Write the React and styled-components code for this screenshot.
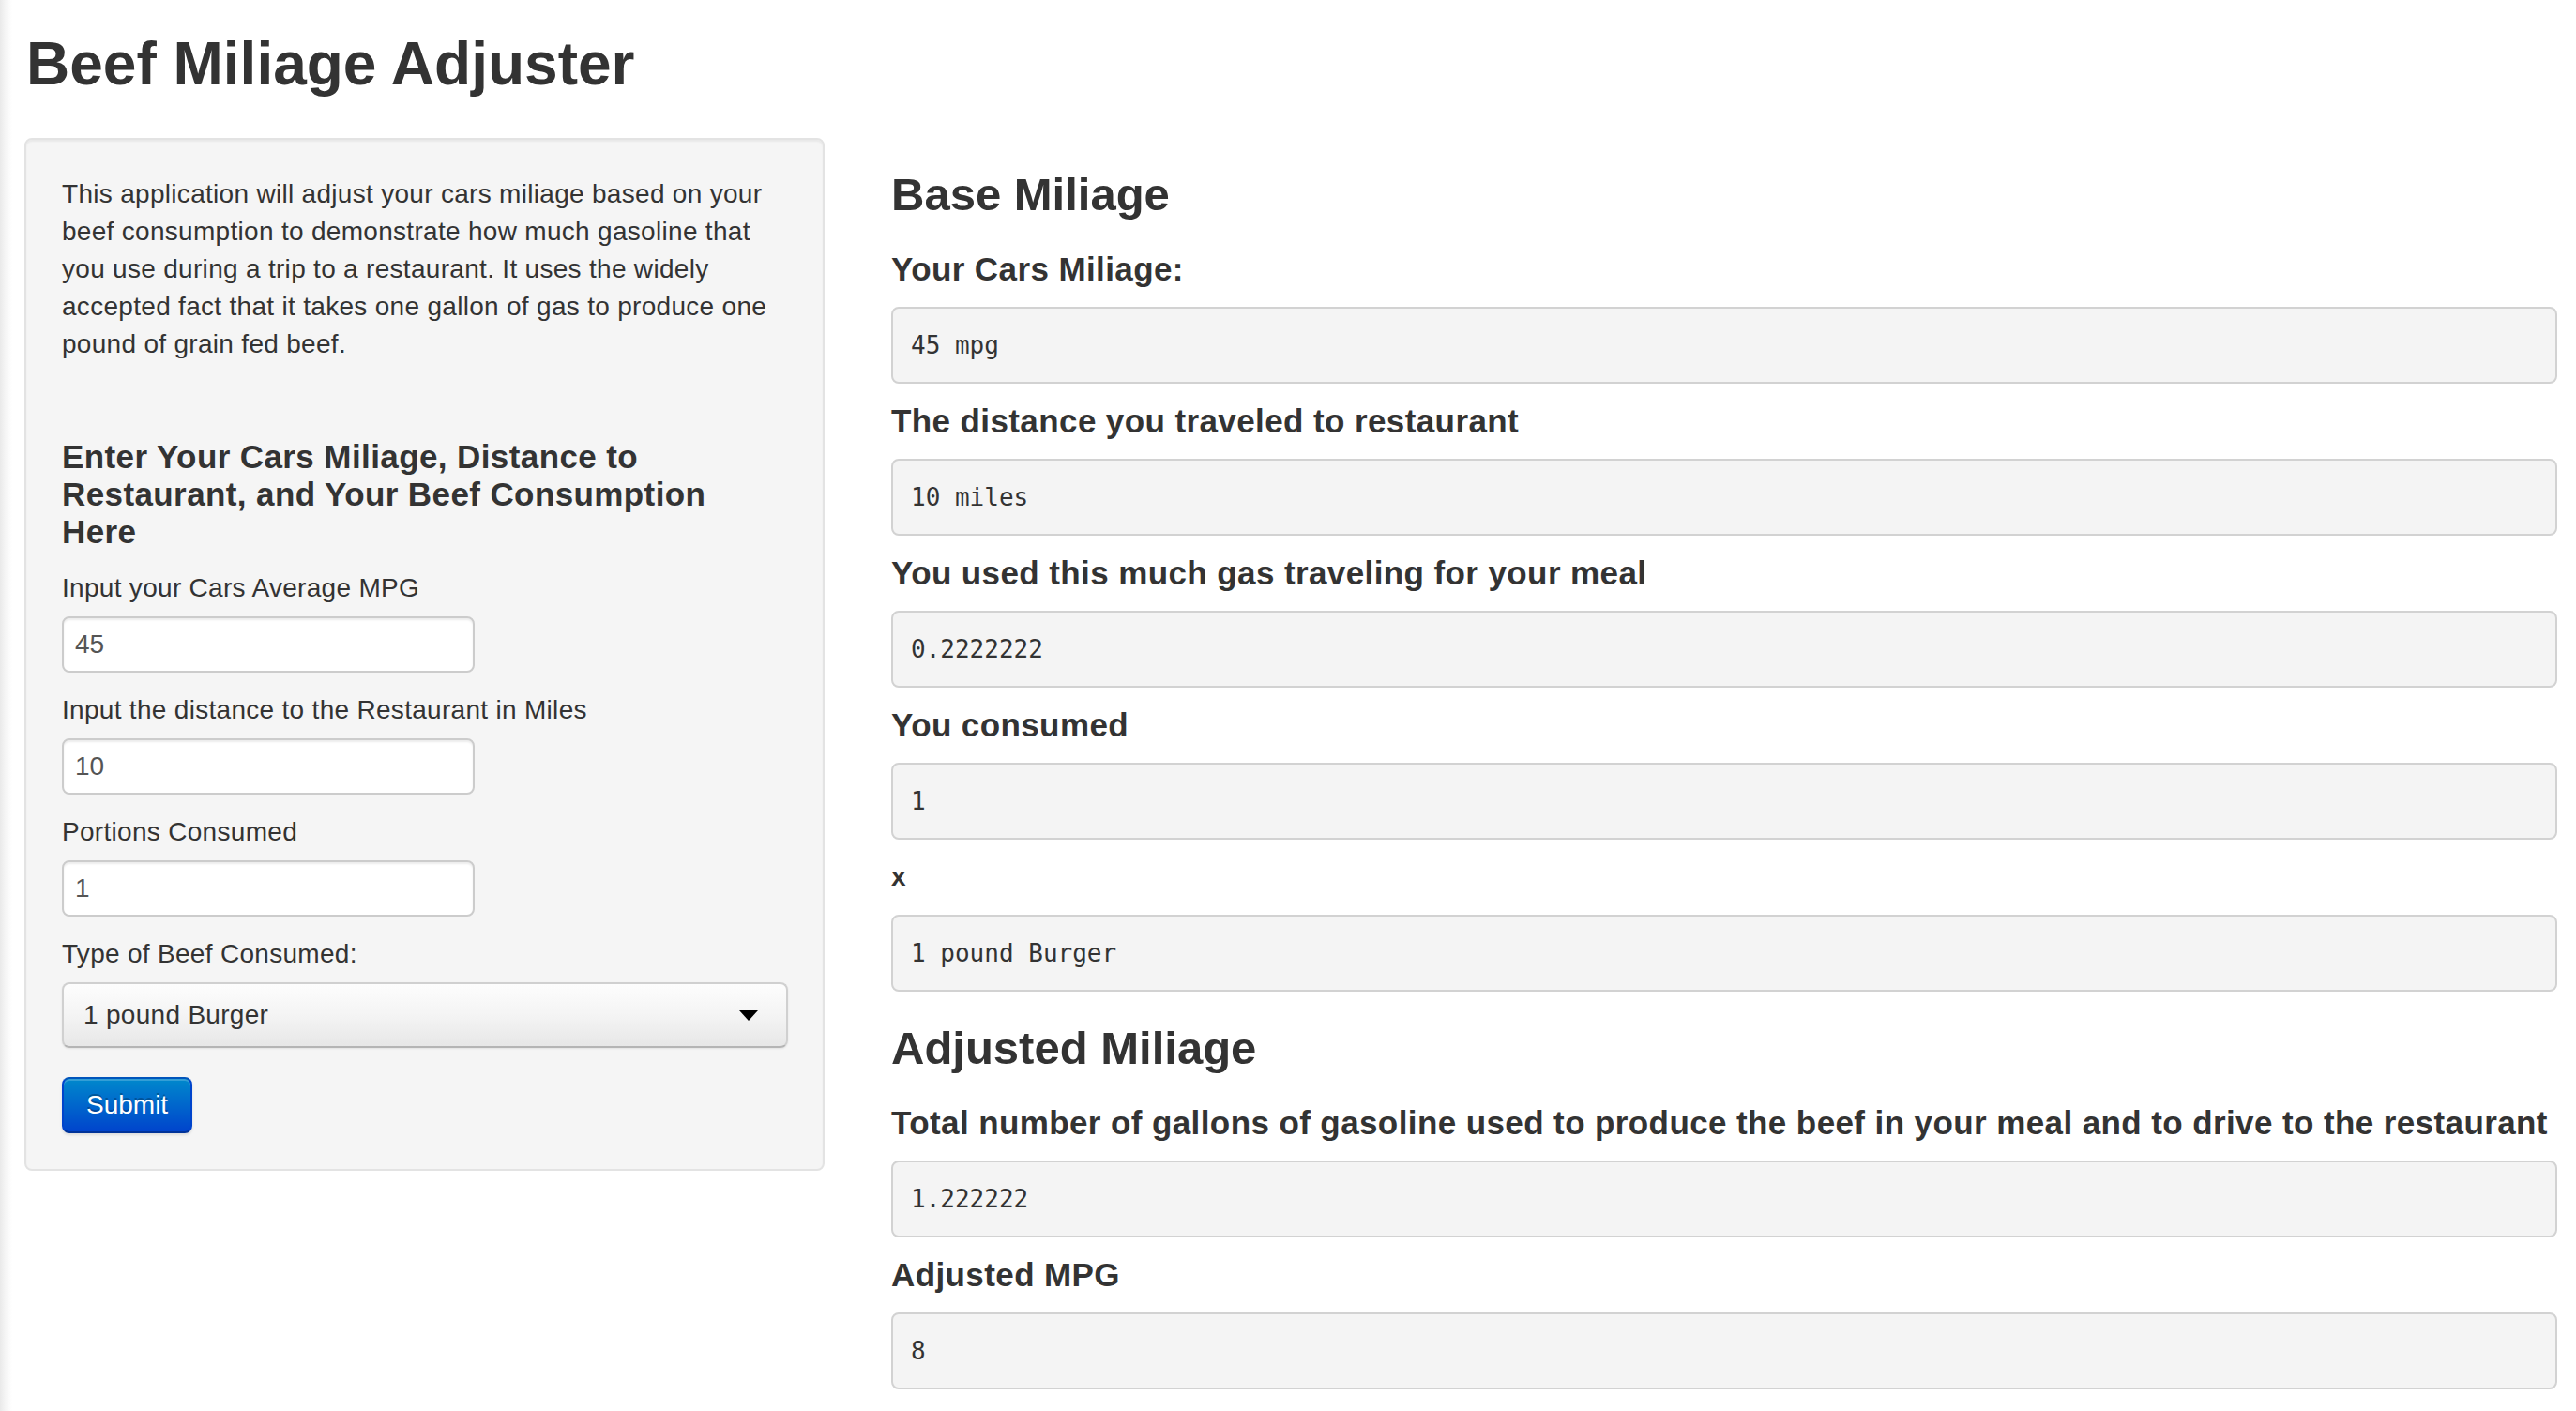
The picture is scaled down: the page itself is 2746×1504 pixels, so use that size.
import React from "react";
import styled, { createGlobalStyle } from "styled-components";

const GlobalStyle = createGlobalStyle`
  html, body {
    margin: 0;
    padding: 0;
  }
  body {
    background: linear-gradient(to right, #e9e9e9 0px, #f6f6f6 6px, #ffffff 13px);
    color: #333333;
    font-family: "Liberation Sans", Arial, Helvetica, sans-serif;
    font-size: 28px;
    line-height: 40px;
    min-height: 1504px;
  }
  * { box-sizing: border-box; }
`;

const Page = styled.div`
  padding: 28px 20px 0 26px;
`;

const Title = styled.h1`
  margin: 0 0 39px 2px;
  font-size: 64px;
  line-height: 80px;
  font-weight: 700;
  color: #333;
`;

const Row = styled.div`
  display: flex;
  align-items: flex-start;
  gap: 71px;
`;

const Well = styled.form`
  width: 853px;
  flex: none;
  padding: 38px;
  background: #f5f5f5;
  border: 2px solid #e3e3e3;
  border-radius: 8px;
  box-shadow: inset 0 2px 2px rgba(0, 0, 0, 0.05);
`;

const Intro = styled.p`
  margin: 0 0 20px;
  font-size: 28px;
  line-height: 40px;
  letter-spacing: 0.3px;
`;

const FormHeading = styled.h4`
  margin: 80px 0 20px;
  font-size: 35px;
  line-height: 40px;
  font-weight: 700;
  letter-spacing: 0.4px;
`;

const Field = styled.div`
  display: flex;
  flex-direction: column;
  align-items: flex-start;
`;

const Label = styled.label`
  display: block;
  margin: 0 0 10px;
  font-size: 28px;
  line-height: 40px;
  letter-spacing: 0.3px;
  color: #333;
`;

const TextInput = styled.input`
  width: 440px;
  height: 60px;
  margin: 0 0 20px;
  padding: 8px 12px;
  font-family: "Liberation Sans", Arial, Helvetica, sans-serif;
  font-size: 28px;
  line-height: 40px;
  color: #555;
  background: #fff;
  border: 2px solid #cccccc;
  border-radius: 8px;
  box-shadow: inset 0 2px 2px rgba(0, 0, 0, 0.075);
  outline: none;
`;

const SelectBox = styled.div`
  width: 774px;
  height: 70px;
  margin: 0 0 31px;
  padding: 0 30px 0 21px;
  display: flex;
  align-items: center;
  justify-content: space-between;
  font-size: 28px;
  letter-spacing: 0.3px;
  color: #333;
  background: linear-gradient(to bottom, #fdfdfd 0%, #f4f4f4 50%, #e7e7e7 100%);
  border: 2px solid #d0d0d0;
  border-bottom-color: #b5b5b5;
  border-radius: 8px;
  box-shadow: 0 1px 2px rgba(0, 0, 0, 0.08);
`;

const Caret = styled.svg`
  width: 20px;
  height: 11px;
  flex: none;
`;

const SubmitButton = styled.button`
  height: 60px;
  padding: 8px 24px;
  font-family: "Liberation Sans", Arial, Helvetica, sans-serif;
  font-size: 28px;
  line-height: 40px;
  color: #fff;
  text-shadow: 0 -2px 0 rgba(0, 0, 0, 0.25);
  background: linear-gradient(to bottom, #0088cc, #0044cc);
  border: 2px solid #0044aa;
  border-color: #0055bb #0044cc #003399;
  border-radius: 8px;
  box-shadow: inset 0 2px 0 rgba(255, 255, 255, 0.2), 0 2px 3px rgba(0, 0, 0, 0.1);
  cursor: pointer;
`;

const Main = styled.div`
  flex: 1;
  min-width: 0;
`;

const SectionTitle = styled.h3`
  margin: 20px 0;
  font-size: 49px;
  line-height: 80px;
  font-weight: 700;
`;

const OutputLabel = styled.h4`
  margin: 20px 0;
  font-size: 35px;
  line-height: 40px;
  font-weight: 700;
  letter-spacing: 0.4px;
`;

const SmallLabel = styled.h5`
  margin: 20px 0;
  font-size: 28px;
  line-height: 40px;
  font-weight: 700;
`;

const Output = styled.pre`
  margin: 0 0 20px;
  padding: 19px;
  font-family: "DejaVu Sans Mono", "Liberation Mono", monospace;
  font-size: 26px;
  line-height: 40px;
  color: #333;
  background: #f4f4f4;
  border: 2px solid #d2d2d2;
  border-radius: 8px;
  white-space: pre-wrap;
`;

const inputs = [
  { id: "mpg", label: "Input your Cars Average MPG", value: "45" },
  { id: "dist", label: "Input the distance to the Restaurant in Miles", value: "10" },
  { id: "portions", label: "Portions Consumed", value: "1" },
];

const baseOutputs = [
  { label: "Your Cars Miliage:", value: "45 mpg" },
  { label: "The distance you traveled to restaurant", value: "10 miles" },
  { label: "You used this much gas traveling for your meal", value: "0.2222222" },
  { label: "You consumed", value: "1" },
];

const adjustedOutputs = [
  {
    label:
      "Total number of gallons of gasoline used to produce the beef in your meal and to drive to the restaurant",
    value: "1.222222",
  },
  { label: "Adjusted MPG", value: "8" },
];

export default function App() {
  return (
    <>
      <GlobalStyle />
      <Page>
        <Title>Beef Miliage Adjuster</Title>
        <Row>
          <Well onSubmit={(e) => e.preventDefault()}>
            <Intro>
              This application will adjust your cars miliage based on your
              <br />
              beef consumption to demonstrate how much gasoline that
              <br />
              you use during a trip to a restaurant. It uses the widely
              <br />
              accepted fact that it takes one gallon of gas to produce one
              <br />
              pound of grain fed beef.
            </Intro>
            <FormHeading>
              Enter Your Cars Miliage, Distance to
              <br />
              Restaurant, and Your Beef Consumption
              <br />
              Here
            </FormHeading>
            {inputs.map((f) => (
              <Field key={f.id}>
                <Label htmlFor={f.id}>{f.label}</Label>
                <TextInput id={f.id} type="text" defaultValue={f.value} />
              </Field>
            ))}
            <Field>
              <Label>Type of Beef Consumed:</Label>
              <SelectBox>
                <span>1 pound Burger</span>
                <Caret viewBox="0 0 20 11">
                  <path d="M0 0 L20 0 L10 11 Z" fill="#000" />
                </Caret>
              </SelectBox>
            </Field>
            <SubmitButton type="submit">Submit</SubmitButton>
          </Well>
          <Main>
            <SectionTitle>Base Miliage</SectionTitle>
            {baseOutputs.map((o) => (
              <React.Fragment key={o.label}>
                <OutputLabel>{o.label}</OutputLabel>
                <Output>{o.value}</Output>
              </React.Fragment>
            ))}
            <SmallLabel>x</SmallLabel>
            <Output>1 pound Burger</Output>
            <SectionTitle>Adjusted Miliage</SectionTitle>
            {adjustedOutputs.map((o) => (
              <React.Fragment key={o.label}>
                <OutputLabel>{o.label}</OutputLabel>
                <Output>{o.value}</Output>
              </React.Fragment>
            ))}
          </Main>
        </Row>
      </Page>
    </>
  );
}
